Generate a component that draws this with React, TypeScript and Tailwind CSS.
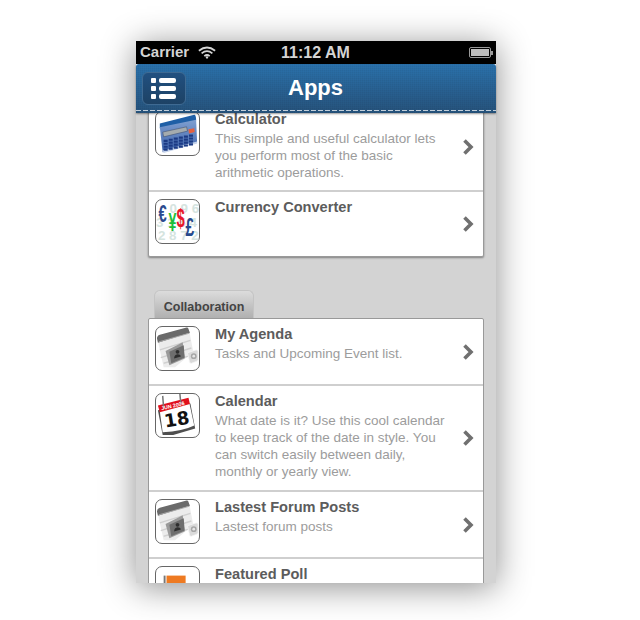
const CalculatorIcon = () => (
  <svg viewBox="0 0 45 45" className="w-full h-full">
    <defs>
      <linearGradient id="calcBody" x1="0" y1="0" x2="0" y2="1">
        <stop offset="0" stopColor="#7f9fd0" />
        <stop offset="1" stopColor="#3c62ab" />
      </linearGradient>
    </defs>
    <path d="M4 12 L40 3 Q42 3 42 9 L4 17 Z" fill="#1f5fa6" />
    <path d="M4 16 L42 8 L43 32 L7 42 Z" fill="url(#calcBody)" />
    <path d="M7 40 L43 31 L43 33 L8 43 Z" fill="#c5d3ea" />
    <path d="M7 21 L32 15.5 L33 20 L8 26 Z" fill="#a4abae" stroke="#3e5070" strokeWidth=".6" />
    <path d="M34 18 L40 17 L40.5 21 L34.5 22.5 Z" fill="#e4603f" />
    {[0, 1, 2, 3].map(r =>
      [0, 1, 2, 3, 4, 5].map(c => (
        <path
          key={`${r}-${c}`}
          d={`M${8 + c * 5.3} ${29 + r * 3.1 - c * 1.1} h4.2 v2.3 h-4.2 Z`}
          fill="#1b3a84"
        />
      ))
    )}
  </svg>
);

const CurrencyIcon = () => (
  <svg viewBox="0 0 45 45" className="w-full h-full" fontFamily="Liberation Sans, sans-serif" fontWeight="700">
    <text x="14" y="14" fontSize="14" fill="#d5e4df">0 9 6</text>
    <text x="0" y="28" fontSize="14" fill="#d5e4df">3 1 5 4</text>
    <text x="2" y="42" fontSize="14" fill="#d5e4df">2 8 7 2</text>
    <text transform="translate(2.5 23) scale(.62 1)" fontSize="25" fill="#2b4a8e">€</text>
    <text transform="translate(13 32) scale(.62 1.1)" fontSize="24" fill="#1fbf3a">¥</text>
    <text transform="translate(21.5 28) scale(.62 1.1)" fontSize="25" fill="#e8172b">$</text>
    <text transform="translate(31 38) scale(.62 1.05)" fontSize="26" fill="#274a8c">£</text>
  </svg>
);

const AgendaIcon = () => (
  <svg viewBox="0 0 45 45" className="w-full h-full">
    <path d="M2 15 L35 5 L39 26 L20 42 L8 42 Z" fill="#ececec" />
    <path d="M1 12 Q1 9 4 8 L32 0.5 Q34 0.5 34 2 L35.5 6 L2 16.5 Z" fill="#6a6a6a" />
    <path d="M3 15.5 L35 6.5" stroke="#a8a8a8" strokeWidth="1" />
    <path d="M4 24 L36 14 M5 32 L37 22 M8 38 L36 30" stroke="#d0d0d0" strokeWidth="1.5" />
    <path d="M10 25 L28 16 L30 33 L14 40 Z" fill="#9a9a9a" />
    <path d="M14 26 L29 19 L30 32 L16 38 Z" fill="#6e6e6e" />
    <circle cx="22.5" cy="26" r="2" fill="#2e2e2e" />
    <path d="M19 33 Q19 29 22.5 28.5 Q26 29 26 31 Z" fill="#2e2e2e" />
    <path d="M33 27 L42 24 Q44 24 44 26 L44 34 Q44 35 42 36 L37 38 Q35 38 35 36 Z" fill="#dadada" stroke="#f4f4f4" strokeWidth=".8" />
    <circle cx="39.5" cy="30.5" r="3" fill="#a6a6a6" />
    <circle cx="39.5" cy="30.5" r="1.4" fill="#e6e6e6" />
  </svg>
);

const CalendarIcon = () => (
  <svg viewBox="0 0 45 45" className="w-full h-full">
    <path d="M2 17 L7 43 L18 43 L41 36 L36 10 Z" fill="#4f4f4f" />
    <path d="M4 18 L35 10 L40 33 Q28 39 7 40 Z" fill="#fff" />
    <path d="M2 12 L34 4 L35.5 10.5 L4 19 Z" fill="#e0101c" />
    <path d="M7 2 L8 15 M25 0 L26 10" stroke="#777" strokeWidth="1.6" />
    <text x="6" y="17" fontSize="5.5" fontWeight="700" fill="#fff" fontFamily="Liberation Sans, sans-serif" transform="rotate(-13 6 17)">JUN 2006</text>
    <text x="9.5" y="35" fontSize="19" fontWeight="700" fill="#111" fontFamily="DejaVu Sans, sans-serif" transform="rotate(-9 10 34)">18</text>
  </svg>
);

const PollIcon = () => (
  <svg viewBox="0 0 45 45" className="w-full h-full">
    <rect x="8" y="9" width="2" height="30" fill="#777" />
    <rect x="11" y="9" width="20" height="15" fill="#ee7a22" />
  </svg>
);

interface RowItem {
  title: string;
  lines: string[];
  icon: React.ReactNode;
  rowClass?: string;
  bodyClass?: string;
}

const rows1: RowItem[] = [
  {
    title: 'Calculator',
    lines: ['This simple and useful calculator lets', 'you perform most of the basic', 'arithmetic operations.'],
    icon: <CalculatorIcon />,
  },
  { title: 'Currency Converter', lines: [], icon: <CurrencyIcon />, rowClass: 'min-h-[64px]' },
];

const rows2: RowItem[] = [
  { title: 'My Agenda', lines: ['Tasks and Upcoming Event list.'], icon: <AgendaIcon /> },
  {
    title: 'Calendar',
    lines: [
      'What date is it? Use this cool calendar',
      'to keep track of the date in style. You',
      'can switch easily between daily,',
      'monthly or yearly view.',
    ],
    icon: <CalendarIcon />,
    bodyClass: 'pb-[10px]',
  },
  { title: 'Lastest Forum Posts', lines: ['Lastest forum posts'], icon: <AgendaIcon /> },
  { title: 'Featured Poll', lines: [], icon: <PollIcon />, rowClass: 'min-h-[90px]' },
];

const Row = ({ title, lines, icon, rowClass = 'min-h-[67px]', bodyClass = 'pb-[9px]' }: RowItem) => (
  <div className={`flex items-center border-b-2 border-[#cfcfcf] last:border-b-0 pl-[6px] pr-[9px] ${rowClass}`}>
    <div className={`flex-1 flex items-start self-start pt-[7px] ${bodyClass}`}>
      <div className="w-[45px] h-[45px] shrink-0 rounded-[7px] border border-[#666] bg-white overflow-hidden">
        {icon}
      </div>
      <div className="ml-[15px] -mt-[1px]">
        <div className="text-[14.6px] leading-[18px] font-bold text-[#5c5c5c]">{title}</div>
        {lines.length > 0 && (
          <div className="mt-[2px] text-[13.5px] leading-[17px] text-[#9c9c9c]">
            {lines.map(line => (
              <div key={line} className="whitespace-nowrap">{line}</div>
            ))}
          </div>
        )}
      </div>
    </div>
    <svg viewBox="0 0 12 16" className="w-[12px] h-[16px] shrink-0">
      <path d="M2.5 1.5 L9 8 L2.5 14.5" fill="none" stroke="#707070" strokeWidth="3.6" />
    </svg>
  </div>
);

export default function App() {
  return (
    <div className="h-[620px] w-[640px] bg-white pt-[41px] overflow-hidden font-['Liberation_Sans',Arial,sans-serif]">
      <div className="ml-[136px] w-[360px] h-[542px] flex flex-col shadow-[0_4px_32px_rgba(0,0,0,0.45)]">
        {/* status bar */}
        <div className="h-[23px] bg-black flex items-center justify-between px-[4px] text-[#d4d4d4] relative shrink-0">
          <div className="flex items-center gap-[9px]">
            <span className="text-[15px] font-bold">Carrier</span>
            <svg viewBox="0 0 20 14" className="w-[18px] h-[13px]">
              <path d="M1 5 Q10 -2 19 5 M4 8 Q10 3 16 8 M7 11 Q10 8.5 13 11" fill="none" stroke="#d4d4d4" strokeWidth="2" />
              <circle cx="10" cy="12.5" r="1.3" fill="#d4d4d4" />
            </svg>
          </div>
          <span className="absolute left-[145px] text-[16px] font-bold">11:12 AM</span>
          <div className="flex items-center mr-[-1px]">
            <div className="w-[22px] h-[11px] border border-[#999] rounded-[2px] p-[1px]">
              <div className="w-full h-full bg-[#bdbdbd]" />
            </div>
            <div className="w-[2px] h-[4px] bg-[#999]" />
          </div>
        </div>
        {/* nav bar */}
        <div className="h-[49px] shrink-0 relative z-10 flex items-center justify-center rounded-t-[3px] bg-gradient-to-b from-[#2a72ad] to-[#26537c] shadow-[0_1px_2px_rgba(0,0,0,0.4)]">
          <div className="absolute inset-0 bg-[repeating-linear-gradient(0deg,rgba(0,0,0,0.03)_0_1px,transparent_1px_2px),repeating-linear-gradient(90deg,rgba(0,0,0,0.03)_0_1px,transparent_1px_2px)]" />
          <div className="absolute left-[6px] top-[8px] w-[44px] h-[33px] rounded-[6px] bg-gradient-to-b from-[#215080] to-[#1d4265] border border-[#3f6a92] flex flex-col justify-center gap-[3px] pl-[8px]">
            {[0, 1, 2].map(i => (
              <div key={i} className="flex gap-[3px]">
                <div className="w-[5px] h-[5px] bg-white rounded-[1px]" />
                <div className="w-[17px] h-[5px] bg-white rounded-[2px]" />
              </div>
            ))}
          </div>
          <span className="relative text-[22px] font-bold text-white -mt-[2px] -ml-[1px]">Apps</span>
          <div className="absolute left-0 right-0 bottom-[2px] h-[1px] bg-[repeating-linear-gradient(90deg,#c2cfdb_0_5px,transparent_5px_7px)]" />
        </div>
        {/* scrolling content */}
        <div className="flex-1 overflow-hidden bg-[#d3d3d3] px-[12px]">
          <div className="-mt-[10px] bg-white border border-[#999] rounded-[2px] shadow-[0_1px_2px_rgba(0,0,0,0.4)]">
            {rows1.map(r => (
              <Row key={r.title} {...r} />
            ))}
          </div>
          <div className="mt-[33px] ml-[6px] w-[100px] h-[28px] rounded-t-[6px] border border-b-0 border-[#c4c4c4] bg-gradient-to-b from-[#dcdcdc] to-[#b0b0b0] flex items-end justify-center pb-[3px]">
            <span className="text-[12.5px] leading-[16px] font-bold text-[#444]">Collaboration</span>
          </div>
          <div className="bg-white border border-[#999] rounded-[2px]">
            {rows2.map(r => (
              <Row key={r.title} {...r} />
            ))}
          </div>
        </div>
      </div>
    </div>
  );
}
